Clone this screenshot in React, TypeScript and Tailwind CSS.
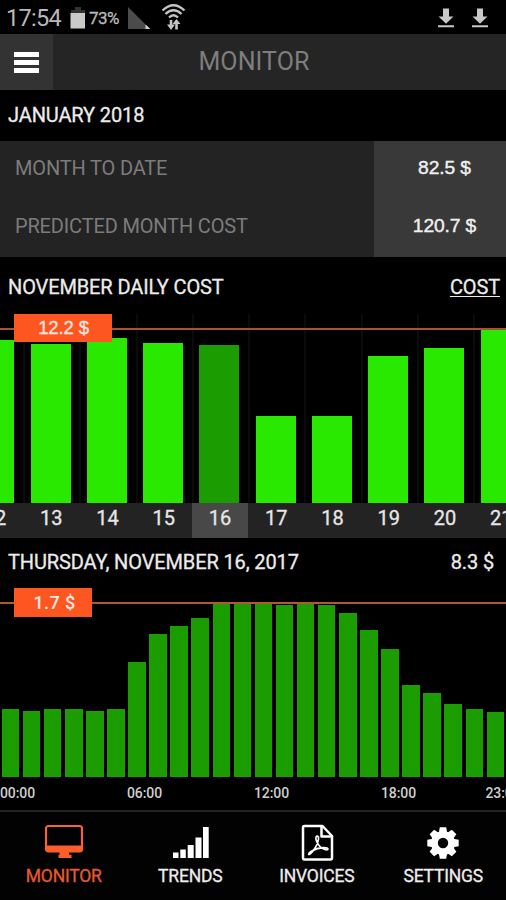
import React from "react";

const days = [
  { label: "12", height: 163 },
  { label: "13", height: 159 },
  { label: "14", height: 165 },
  { label: "15", height: 160 },
  { label: "16", height: 158, selected: true },
  { label: "17", height: 87 },
  { label: "18", height: 87 },
  { label: "19", height: 147 },
  { label: "20", height: 155 },
  { label: "21", height: 174 },
];

const hours = [
  68, 66, 68, 68, 66, 68, 115.5, 143, 151, 159.5, 173, 173, 173, 172.5, 173, 172.5, 164.5, 147.5, 128,
  92, 84, 73, 68, 65,
];

function StatusBar() {
  return (
    <div className="flex h-[34px] items-center pl-[6px] text-[#b8b8b8]">
      <span className="w-[64px] pt-[2px] text-[23.500px] leading-[34px] tracking-[-0.7px]">17:54</span>
      <svg className="mt-[2px] h-[24px] w-[16px]" viewBox="0 0 16 24">
        <path d="M5 1h6v3h4v4H1V4h4z" fill="#333" />
        <path d="M0.5 7h14.500v15.500H0.500z" fill="#c9c9c9" />
      </svg>
      <span className="ml-[3px] w-[32px] pt-[4px] text-[17px] tracking-[-0.6px] [-webkit-text-stroke:0.3px]">73%</span>
      <svg className="ml-[7px] h-[24px] w-[24px]" viewBox="0 0 24 24">
        <path d="M0 2 L22 24 H0z" fill="#4b4b4b" />
        <path d="M17.500 19.500 L23 24.500 H17.500z" fill="#d0d0d0" />
      </svg>
      <svg className="ml-[9px] h-[28px] w-[26px]" viewBox="0 0 26 28" fill="none" stroke="#c4c4c4">
        <path d="M1.500 7.500 Q12.500 -3 23.500 7.500" strokeWidth="2.400" />
        <path d="M4.500 11 Q12.500 3.500 20.500 11" strokeWidth="2.300" />
        <path d="M8 14.500 Q12.500 10 17 14.500" strokeWidth="2.300" />
        <path d="M10 17v6M15.500 20v6.500" strokeWidth="2.600" />
        <path d="M6 21.500h8l-4 5.500zM11.500 21h8l-4-5z" fill="#c4c4c4" stroke="none" />
      </svg>
      <div className="ml-auto flex gap-[18px] pr-[18px]">
        <DownloadIcon />
        <DownloadIcon />
      </div>
    </div>
  );
}

function DownloadIcon() {
  return (
    <svg className="mt-[2px] h-[20px] w-[16px]" viewBox="0 0 16 20" fill="#c8c8c8">
      <path d="M5 0.500h6v8h4.500L8 15.800 0.500 8.500H5zM0 17.200h16v2H0z" />
    </svg>
  );
}

function DailyChart() {
  return (
    <section className="relative h-[224px] overflow-hidden">
      <div className="ml-[-33.200px] flex w-[562.500px]">
        {days.map((d) => (
          <div key={d.label} className="w-[56.250px] shrink-0">
            <div className="flex h-[189px] items-end justify-center border-l-2 border-[#0b0b0b] pr-[3px]">
              <div className={d.selected ? "w-[40px] bg-[#1b9c00]" : "w-[40px] bg-[#29e900]"} style={{ height: d.height }} />
            </div>
            <div className={"h-[35px] text-center text-[20px] leading-[31px] text-[#e6e6e6] [-webkit-text-stroke:0.3px] " + (d.selected ? "bg-[#484848]" : "bg-[#232323]")}>
              {d.label}
            </div>
          </div>
        ))}
      </div>
      <div className="absolute left-0 top-[14px] h-[2px] w-full bg-[#a65336]" />
      <div className="absolute left-[14px] top-0 h-[28px] w-[98px] bg-[#fe5621] pl-[1px] text-center font-['Liberation_Sans',sans-serif] text-[18.500px] leading-[28px] text-[#ffeae2] [-webkit-text-stroke:0.3px]">
        12.2 $
      </div>
    </section>
  );
}

function HourlyChart() {
  return (
    <section className="relative h-[224px] overflow-hidden">
      <div className="flex h-[191px] items-end">
        {hours.map((h, i) => (
          <div key={i} className="flex flex-1 justify-center">
            <div className="w-[17.500px] bg-[#1b9c00]" style={{ height: h }} />
          </div>
        ))}
      </div>
      <div className="flex h-[33px] text-[14px] font-medium leading-[33px] tracking-[-0.1px] text-[#cfcfcf]">
        <span className="w-[127px] shrink-0">00:00</span>
        <span className="w-[127px] shrink-0">06:00</span>
        <span className="w-[127px] shrink-0">12:00</span>
        <span className="w-[104.500px] shrink-0">18:00</span>
        <span className="shrink-0">23:00</span>
      </div>
      <div className="absolute left-0 top-[16px] h-[2px] w-full bg-[#b4562f]" />
      <div className="absolute left-[14px] top-[2px] h-[29px] w-[78px] bg-[#fe5621] pl-[3px] text-center text-[18px] font-medium leading-[29px] tracking-[0.4px] text-[#ffeae2]">
        1.7 $
      </div>
    </section>
  );
}

function MonitorIcon() {
  return (
    <svg className="h-[38px] w-[38px]" viewBox="0 0 38 38">
      <rect x="1" y="2" width="36" height="25.500" rx="2.500" fill="none" stroke="#fb6430" strokeWidth="2.200" />
      <path d="M1 21.500h36v4q0 2.500-2.500 2.500H3.500Q1 28 1 25.500zM14.500 27h9l1 4h2v3h-13v-3h1z" fill="#fe5f2a" />
    </svg>
  );
}

function TrendsIcon() {
  return (
    <svg className="h-[38px] w-[38px]" viewBox="0 0 38 38" fill="#fff">
      <path d="M2 28.500h5.500v5.500H2zM9.300 25.500h5.500V34H9.300zM16.700 21h6v13h-6zM24.500 13.500h6V34h-6zM32 3h5.700v31H32z" />
    </svg>
  );
}

function InvoiceIcon() {
  return (
    <svg className="h-[38px] w-[38px]" viewBox="0 0 38 38" fill="none" stroke="#fff" strokeLinejoin="round" strokeLinecap="round">
      <path d="M6.500 2h18L34 12v22q0 1.500-1.500 1.500h-26Q5 35.500 5 34V3.500Q5 2 6.500 2z" strokeWidth="2.500" />
      <path d="M23.500 2.500v10H34" strokeWidth="2.500" />
      <path d="M19 12c-2 1-1 4 0 6 1.500 4 5 7 9.500 8 2 0 2-2-.5-2.200-5-.5-10 .7-15 3.700-3 2-3 4-1 2.500 4-3 8-10 8.500-15 .2-2-.5-3-1.500-3z" strokeWidth="1.700" />
    </svg>
  );
}

function SettingsIcon() {
  return (
    <svg className="h-[38px] w-[38px]" viewBox="0 0 38 38">
      <g transform="translate(19 19)" fill="#fff">
        {[0, 45, 90, 135].map((angle) => (
          <path key={angle} d="M-4.200 -10L-3.200 -15.700H3.200L4.200 -10V10L3.200 15.700H-3.200L-4.200 10z" transform={"rotate(" + angle + ")"} />
        ))}
        <circle r="12" />
        <circle r="5.200" fill="#050505" />
      </g>
    </svg>
  );
}

const tabs = [
  { label: "MONITOR", Icon: MonitorIcon },
  { label: "TRENDS", Icon: TrendsIcon },
  { label: "INVOICES", Icon: InvoiceIcon },
  { label: "SETTINGS", Icon: SettingsIcon },
];

export default function App() {
  return (
    <main className="h-[900px] w-[506px] overflow-hidden bg-black font-['Roboto',sans-serif] text-[20px] tracking-[-0.12px] text-[#ececec]">
      <StatusBar />
      <header className="flex h-[56px] bg-[#252525]">
        <button className="flex w-[53px] flex-col items-center justify-center gap-[3px] bg-[#333]">
          <span className="h-[5px] w-[25px] bg-white" />
          <span className="h-[5px] w-[25px] bg-white" />
          <span className="h-[5px] w-[25px] bg-white" />
        </button>
        <h1 className="flex-1 pr-[51px] text-center text-[25px] leading-[55px] tracking-[0.1px] text-[#7e7e7e]">MONITOR</h1>
      </header>
      <h2 className="h-[51px] pl-[8px] leading-[50px] [-webkit-text-stroke:0.3px]">JANUARY 2018</h2>
      <section className="flex h-[116px]">
        <div className="w-[374px] bg-[#232323] pl-[15px] leading-[58px] tracking-[-0.16px] text-[#7c7c7c]">
          <p className="-mt-[2px]">MONTH TO DATE</p>
          <p>PREDICTED MONTH COST</p>
        </div>
        <div className="flex-1 bg-[#393939] pl-[9px] text-center font-['Liberation_Sans',sans-serif] text-[19.250px] leading-[58px] text-[#f0f0f0] [-webkit-text-stroke:0.4px]">
          <p className="-mt-[2px]">82.5 $</p>
          <p>120.7 $</p>
        </div>
      </section>
      <div className="flex h-[57px] justify-between pl-[8px] pr-[6px] leading-[61px] [-webkit-text-stroke:0.3px]">
        <h2>NOVEMBER DAILY COST</h2>
        <span className="underline decoration-1 underline-offset-2">COST</span>
      </div>
      <DailyChart />
      <div className="flex h-[48px] justify-between pl-[8px] pr-[12px] leading-[48px] [-webkit-text-stroke:0.3px]">
        <h2>THURSDAY, NOVEMBER 16, 2017</h2>
        <span>8.3 $</span>
      </div>
      <HourlyChart />
      <nav className="flex h-[90px] border-t-2 border-[#242424] bg-[#020202] pt-[12px]">
        {tabs.map(({ label, Icon }, i) => (
          <div key={label} className={"flex flex-1 flex-col items-center pl-[1px] " + (i === 0 ? "text-[#e65a32]" : "text-[#ededed]")}>
            <Icon />
            <span className="text-[17.500px] leading-[29px] tracking-[-0.2px] [-webkit-text-stroke:0.3px]">{label}</span>
          </div>
        ))}
      </nav>
    </main>
  );
}
